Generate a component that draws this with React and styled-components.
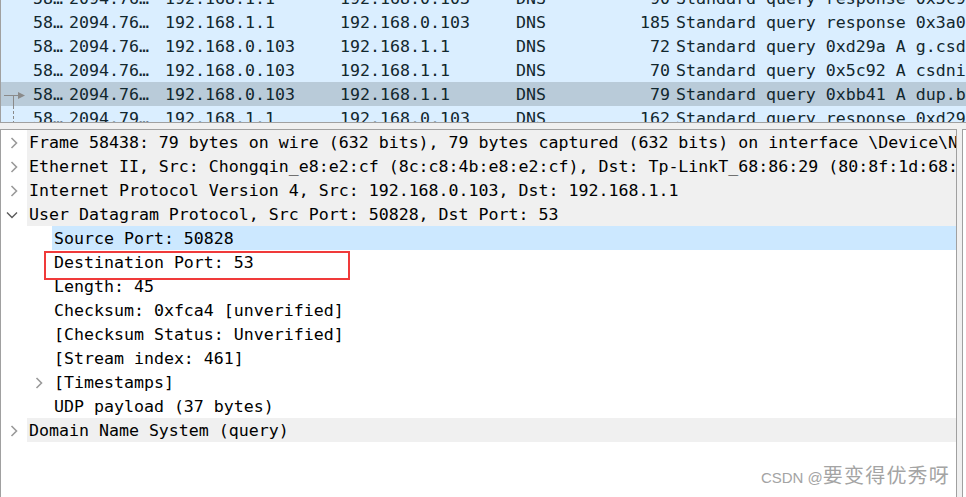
import React from "react";
import styled, { createGlobalStyle } from "styled-components";

const GlobalStyle = createGlobalStyle`
  html, body {
    margin: 0;
    padding: 0;
    background: #f0f0f0;
    overflow: hidden;
  }
`;

const mono = `"DejaVu Sans Mono", "Liberation Mono", monospace`;

const Window = styled.div`
  width: 966px;
  height: 497px;
  display: flex;
  flex-direction: column;
  background: #f0f0f0;
  position: relative;
  overflow: hidden;
  font-family: ${mono};
  font-size: 16.6px;
`;

// 上面的分组列表
const PacketList = styled.div`
  height: 122px;
  flex: none;
  overflow: hidden;
  border-left: 1px solid #a0a0a0;
  border-bottom: 1px solid #a0a0a0;
  background: #daeeff;
  margin-bottom: 6px;
`;

const PacketScroll = styled.div`
  margin-top: -14px;
`;

const PacketRow = styled.div`
  display: grid;
  grid-template-columns: 32px 36px 96px 175px 176px 100px 54px 1fr;
  height: 24px;
  padding-top: 1px;
  box-sizing: border-box;
  line-height: 23px;
  white-space: nowrap;
  color: #12272e;
  background: ${({ selected }) => (selected ? "#b9cbd9" : "#daeeff")};
`;

const Cell = styled.span`
  overflow: hidden;
  text-align: ${({ right }) => (right ? "right" : "left")};
  padding-left: ${({ info }) => (info ? "6px" : "0")};
`;

const Mark = styled.span`
  position: relative;
  display: block;
  height: 23px;
`;

// 下面的详情面板
const Lower = styled.div`
  flex: 1;
  display: flex;
  min-height: 0;
`;

const DetailPane = styled.div`
  width: 955px;
  flex: none;
  background: #ffffff;
  border: 1px solid #a0a0a0;
  border-bottom: none;
  overflow: hidden;
`;

const BytesPane = styled.div`
  flex: 1;
  margin-left: 5px;
  background: #ffffff;
  border-left: 1px solid #a0a0a0;
  border-top: 1px solid #a0a0a0;
`;

const TreeRow = styled.div`
  position: relative;
  display: flex;
  height: 24px;
  padding-left: ${({ level }) => level * 25}px;
  white-space: nowrap;
  color: #000;
`;

const Expander = styled.span`
  width: 26px;
  flex: none;
  display: flex;
  align-items: center;
  justify-content: center;
`;

const Label = styled.span`
  flex: 1;
  padding: 1px 0 0 2px;
  line-height: 23px;
  overflow: hidden;
  background: ${({ selected, top }) =>
    selected ? "#cce8ff" : top ? "#f0f0f0" : "transparent"};
`;

const RedBox = styled.span`
  position: absolute;
  left: 43px;
  top: 1px;
  width: 302px;
  height: 25px;
  border: 2px solid #f03a3a;
  pointer-events: none;
`;

const Watermark = styled.div`
  position: absolute;
  right: 16px;
  bottom: 6px;
  color: #a4a4a4;
  white-space: nowrap;
  line-height: 26px;
`;

const WmLatin = styled.span`
  font-family: "Liberation Sans", Arial, sans-serif;
  font-size: 15px;
`;

const WmCjk = styled.span`
  font-family: "Noto Sans CJK SC", sans-serif;
  font-size: 20px;
  letter-spacing: 1.2px;
`;

const packets = [
  ["58…", "2094.76…", "192.168.1.1", "192.168.0.103", "DNS", "90", "Standard query response 0x5c92 A csdnimg.cn"],
  ["58…", "2094.76…", "192.168.1.1", "192.168.0.103", "DNS", "185", "Standard query response 0x3a0f A g.csdn.net"],
  ["58…", "2094.76…", "192.168.0.103", "192.168.1.1", "DNS", "72", "Standard query 0xd29a A g.csdn.net"],
  ["58…", "2094.76…", "192.168.0.103", "192.168.1.1", "DNS", "70", "Standard query 0x5c92 A csdnimg.cn"],
  ["58…", "2094.76…", "192.168.0.103", "192.168.1.1", "DNS", "79", "Standard query 0xbb41 A dup.baidu.com"],
  ["58…", "2094.79…", "192.168.1.1", "192.168.0.103", "DNS", "162", "Standard query response 0xd29a A g.csdn.net"],
];

const tree = [
  { level: 0, top: true, exp: "closed", text: "Frame 58438: 79 bytes on wire (632 bits), 79 bytes captured (632 bits) on interface \\Device\\NPF_{7A3F}, id 0" },
  { level: 0, top: true, exp: "closed", text: "Ethernet II, Src: Chongqin_e8:e2:cf (8c:c8:4b:e8:e2:cf), Dst: Tp-LinkT_68:86:29 (80:8f:1d:68:86:29)" },
  { level: 0, top: true, exp: "closed", text: "Internet Protocol Version 4, Src: 192.168.0.103, Dst: 192.168.1.1" },
  { level: 0, top: true, exp: "open", text: "User Datagram Protocol, Src Port: 50828, Dst Port: 53" },
  { level: 1, selected: true, text: "Source Port: 50828" },
  { level: 1, marked: true, text: "Destination Port: 53" },
  { level: 1, text: "Length: 45" },
  { level: 1, text: "Checksum: 0xfca4 [unverified]" },
  { level: 1, text: "[Checksum Status: Unverified]" },
  { level: 1, text: "[Stream index: 461]" },
  { level: 1, exp: "closed", text: "[Timestamps]" },
  { level: 1, text: "UDP payload (37 bytes)" },
  { level: 0, top: true, exp: "closed", text: "Domain Name System (query)" },
];

const Chevron = ({ open }) =>
  open ? (
    <svg width="12" height="8" viewBox="0 0 12 8" style={{ marginLeft: -4, marginTop: 1 }}>
      <polyline points="1,1.5 6,6.5 11,1.5" fill="none" stroke="#5a5a5a" strokeWidth="1.4" />
    </svg>
  ) : (
    <svg width="8" height="12" viewBox="0 0 8 12" style={{ marginTop: 1 }}>
      <polyline points="1.5,1 6.5,6 1.5,11" fill="none" stroke="#9a9a9a" strokeWidth="1.6" />
    </svg>
  );

// 相关分组的指示线
const RelatedMark = ({ kind }) => (
  <svg width="32" height="24" viewBox="0 0 32 24" style={{ position: "absolute", left: 0, top: -1 }}>
    {kind === "start" && (
      <>
        <line x1="3" y1="13.5" x2="19" y2="13.5" stroke="#8a8a8a" strokeWidth="1" />
        <polygon points="17,10 24,13.5 17,17" fill="#8a8a8a" />
        <line x1="12.5" y1="13.5" x2="12.5" y2="24" stroke="#8a8a8a" strokeWidth="1" />
      </>
    )}
    {kind === "dashed" && (
      <line x1="12.5" y1="0" x2="12.5" y2="24" stroke="#8a8a8a" strokeWidth="1" strokeDasharray="3 2" />
    )}
  </svg>
);

const App = () => {
  return (
    <>
      <GlobalStyle />
      <Window>
        <PacketList>
          <PacketScroll>
            {packets.map((p, i) => (
              <PacketRow key={i} selected={i === 4}>
                <Mark>
                  {i === 4 && <RelatedMark kind="start" />}
                  {i === 5 && <RelatedMark kind="dashed" />}
                </Mark>
                <Cell>{p[0]}</Cell>
                <Cell>{p[1]}</Cell>
                <Cell>{p[2]}</Cell>
                <Cell>{p[3]}</Cell>
                <Cell>{p[4]}</Cell>
                <Cell right>{p[5]}</Cell>
                <Cell info>{p[6]}</Cell>
              </PacketRow>
            ))}
          </PacketScroll>
        </PacketList>

        <Lower>
          <DetailPane>
            {tree.map((n, i) => (
              <TreeRow key={i} level={n.level}>
                <Expander>{n.exp && <Chevron open={n.exp === "open"} />}</Expander>
                <Label top={n.top} selected={n.selected}>
                  {n.text}
                </Label>
                {n.marked && <RedBox />}
              </TreeRow>
            ))}
          </DetailPane>
          <BytesPane />
        </Lower>

        <Watermark>
          <WmLatin>CSDN @</WmLatin>
          <WmCjk>要变得优秀呀</WmCjk>
        </Watermark>
      </Window>
    </>
  );
};

export default App;
